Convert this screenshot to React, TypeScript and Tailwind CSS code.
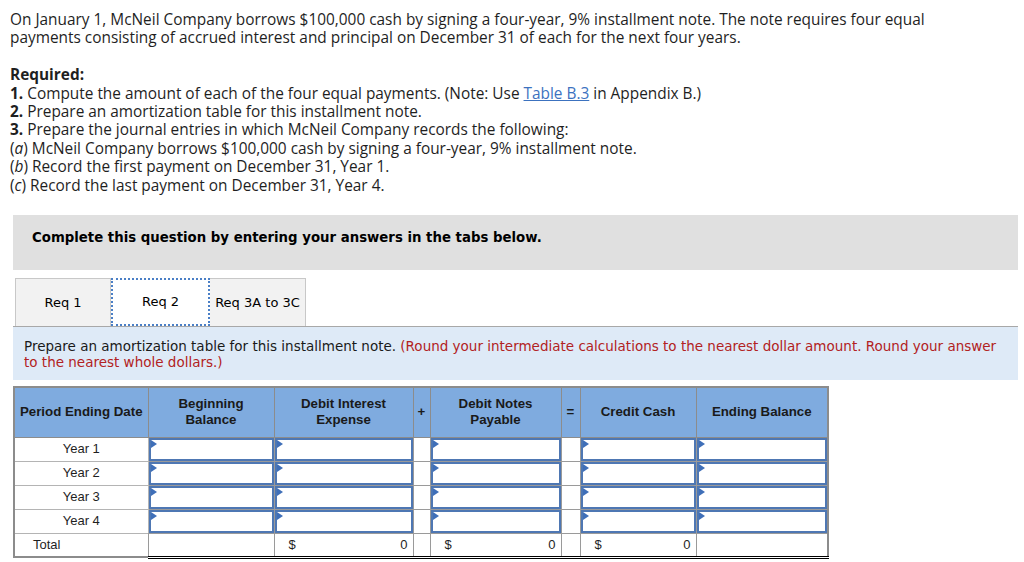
import React from "react";

const Arrow = () => (
  <svg className="absolute left-0 top-0" width="6" height="8" viewBox="0 0 6 8">
    <polygon points="0,0 6,4 0,8" fill="#3f6fb8" />
  </svg>
);

const InputCell = () => (
  <td className="border border-[#9a9a9a] p-0 h-[24px]">
    <div className="relative h-[23px] border-2 border-[#4e77b3] bg-white">
      <Arrow />
    </div>
  </td>
);

const OpCell = () => <td className="border border-[#9a9a9a] p-0 h-[24px] bg-white"></td>;

const totalCell = "border border-[#9a9a9a] border-b-[3px] border-b-black border-double p-0 h-[24px]";

export default function App() {
  const years = ["Year 1", "Year 2", "Year 3", "Year 4"];
  return (
    <div className="w-[1024px] h-[562px] bg-white overflow-hidden text-[#1f1f1f]">
      <div className="pl-[10px] pt-[11px] font-['Open_Sans',sans-serif] text-[15.4px] leading-[18.4px] whitespace-nowrap">
        <p>
          On January 1, McNeil Company borrows $100,000 cash by signing a four-year, 9% installment note. The note requires four equal
          <br />
          payments consisting of accrued interest and principal on December 31 of each for the next four years.
        </p>
        <p className="mt-[18.4px] font-bold">Required:</p>
        <p><b>1.</b> Compute the amount of each of the four equal payments. (Note: Use <span className="text-[#3c72bf] underline">Table B.3</span> in Appendix B.)</p>
        <p><b>2.</b> Prepare an amortization table for this installment note.</p>
        <p><b>3.</b> Prepare the journal entries in which McNeil Company records the following:</p>
        <p>(<i>a</i>) McNeil Company borrows $100,000 cash by signing a four-year, 9% installment note.</p>
        <p>(<i>b</i>) Record the first payment on December 31, Year 1.</p>
        <p>(<i>c</i>) Record the last payment on December 31, Year 4.</p>
      </div>

      <div className="ml-[13px] w-[1005px] mt-[20px] h-[55px] bg-[#e0e0e0] pt-[15px] pl-[19px] font-['DejaVu_Sans',Verdana,sans-serif] text-[13.3px] leading-[16px] font-bold text-black">
        Complete this question by entering your answers in the tabs below.
      </div>

      <div className="ml-[15px] mt-[8px] flex h-[48px] font-['DejaVu_Sans',Verdana,sans-serif] text-[13px] text-black">
        <div className="w-[96px] bg-[#f2f2f2] border border-b-0 border-[#c8c8c8] flex items-center justify-center">Req 1</div>
        <div className="w-[99px] bg-white border-2 border-dotted border-[#4a7fc6] flex items-center justify-center">Req 2</div>
        <div className="w-[96px] bg-[#f2f2f2] border border-b-0 border-l-0 border-[#c8c8c8] flex items-center justify-center">Req 3A to 3C</div>
      </div>

      <div className="ml-[13px] w-[1005px] h-[54px] bg-[#deeaf7] border-t border-[#a8a8a8] px-[11px] pt-[11px] font-['DejaVu_Sans',Verdana,sans-serif] text-[13.5px] leading-[16px] text-[#1a1a1a] whitespace-nowrap">
        Prepare an amortization table for this installment note. <span className="text-[#b22222]">(Round your intermediate calculations to the nearest dollar amount. Round your answer<br />to the nearest whole dollars.)</span>
      </div>

      <table className="ml-[13px] mt-[6px] border-collapse table-fixed w-[814px] font-['Liberation_Sans',Arial,sans-serif] text-[13px] text-[#1f1f1f] border-2 border-[#8c8c8c]">
        <colgroup>
          <col className="w-[134px]" />
          <col className="w-[126px]" />
          <col className="w-[139px]" />
          <col className="w-[17px]" />
          <col className="w-[131px]" />
          <col className="w-[19px]" />
          <col className="w-[116px]" />
          <col className="w-[132px]" />
        </colgroup>
        <thead>
          <tr className="h-[50px] bg-[#7fabdf] font-bold text-[#1a1a1a] leading-[16px] text-[13.3px]">
            <th className="border border-[#8c8c8c] px-[2px] font-bold">Period Ending Date</th>
            <th className="border border-[#8c8c8c] font-bold">Beginning<br />Balance</th>
            <th className="border border-[#8c8c8c] font-bold">Debit Interest<br />Expense</th>
            <th className="border border-[#8c8c8c] font-bold">+</th>
            <th className="border border-[#8c8c8c] font-bold">Debit Notes<br />Payable</th>
            <th className="border border-[#8c8c8c] font-bold">=</th>
            <th className="border border-[#8c8c8c] font-bold">Credit Cash</th>
            <th className="border border-[#8c8c8c] font-bold">Ending Balance</th>
          </tr>
        </thead>
        <tbody>
          {years.map((y) => (
            <tr key={y}>
              <td className="border border-[#b4b4b4] text-center p-0 h-[24px]">{y}</td>
              <InputCell />
              <InputCell />
              <OpCell />
              <InputCell />
              <OpCell />
              <InputCell />
              <InputCell />
            </tr>
          ))}
          <tr>
            <td className="border border-[#9a9a9a] p-0 pl-[18px] h-[24px]">Total</td>
            <td className={totalCell}></td>
            <td className={totalCell}>
              <div className="flex justify-between pl-[14px] pr-[5px]"><span>$</span><span>0</span></div>
            </td>
            <td className={totalCell}></td>
            <td className={totalCell}>
              <div className="flex justify-between pl-[14px] pr-[5px]"><span>$</span><span>0</span></div>
            </td>
            <td className={totalCell}></td>
            <td className={totalCell}>
              <div className="flex justify-between pl-[14px] pr-[5px]"><span>$</span><span>0</span></div>
            </td>
            <td className={totalCell}></td>
          </tr>
        </tbody>
      </table>
    </div>
  );
}
